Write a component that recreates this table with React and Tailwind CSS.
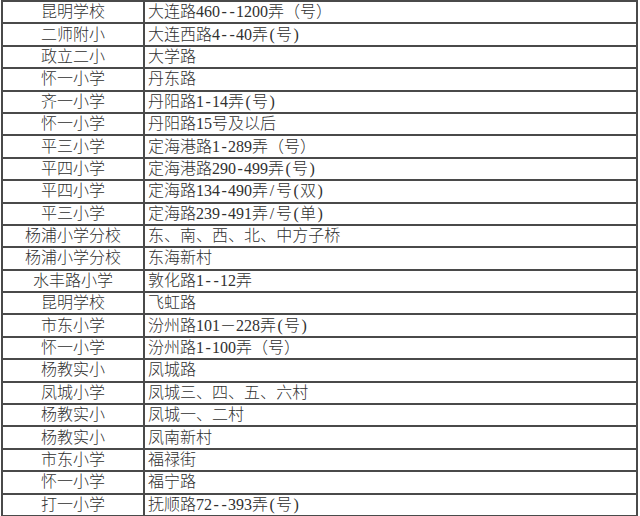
const rows = [
  ["昆明学校", "大连路460--1200弄（号）"],
  ["二师附小", "大连西路4--40弄(号)"],
  ["政立二小", "大学路"],
  ["怀一小学", "丹东路"],
  ["齐一小学", "丹阳路1-14弄(号)"],
  ["怀一小学", "丹阳路15号及以后"],
  ["平三小学", "定海港路1-289弄（号）"],
  ["平四小学", "定海港路290-499弄(号)"],
  ["平四小学", "定海路134-490弄/号(双)"],
  ["平三小学", "定海路239-491弄/号(单)"],
  ["杨浦小学分校", "东、南、西、北、中方子桥"],
  ["杨浦小学分校", "东海新村"],
  ["水丰路小学", "敦化路1--12弄"],
  ["昆明学校", "飞虹路"],
  ["市东小学", "汾州路101－228弄(号)"],
  ["怀一小学", "汾州路1-100弄（号）"],
  ["杨教实小", "凤城路"],
  ["凤城小学", "凤城三、四、五、六村"],
  ["杨教实小", "凤城一、二村"],
  ["杨教实小", "凤南新村"],
  ["市东小学", "福禄街"],
  ["怀一小学", "福宁路"],
  ["打一小学", "抚顺路72--393弄(号)"],
];

function Cell({ text }) {
  return text.split("").map((ch, i) =>
    ch === "-" || ch === "(" || ch === ")" || ch === "/" ? (
      <span key={i} className="inline-block w-[8px] text-center">
        {ch}
      </span>
    ) : (
      <span key={i}>{ch}</span>
    )
  );
}

export default function App() {
  return (
    <div className="w-[640px] h-[516px] overflow-hidden bg-white">
      <div
        className="ml-px w-[637px] border-t-2 border-l-2 border-r-2 border-[#4a4a4a] text-[16px] text-[#303030] font-light"
        style={{ fontFamily: '"Liberation Serif", "Noto Sans CJK SC", serif' }}
      >
        {rows.map(([a, b], i) => (
          <div key={i} className="flex h-[22.4px] border-b-2 border-[#4a4a4a]">
            <div className="w-[142px] shrink-0 border-r-2 border-[#4a4a4a] flex items-center justify-center leading-none">
              {a}
            </div>
            <div className="flex-1 flex items-center pl-[3px] leading-none whitespace-nowrap">
              <Cell text={b} />
            </div>
          </div>
        ))}
      </div>
    </div>
  );
}
